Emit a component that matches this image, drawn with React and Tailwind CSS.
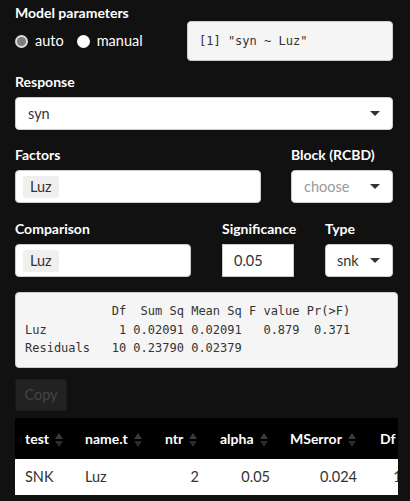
import React from 'react';

const Label = ({ children, className = '' }) => (
    <div className={`h-[21px] leading-[21px] text-[14px] font-bold text-white mb-[5px] ${className}`}>{children}</div>
);

const Caret = () => (
    <span className="w-0 h-0 border-l-[5px] border-r-[5px] border-t-[5px] border-l-transparent border-r-transparent border-t-[#333]"></span>
);

const SortIcon = () => (
    <svg width="8" height="16" viewBox="0 0 8 16" className="inline-block ml-[6px] align-middle">
        <polygon points="0,7 4,1 8,7" fill="#3a3a3a" />
        <polygon points="0,9 8,9 4,15" fill="#2a2a2a" />
    </svg>
);

const Chip = ({ children }) => (
    <span className="inline-block bg-[#efefef] text-[#333] rounded-[3px] px-[7px] h-[22px] leading-[22px] text-[14.5px]">{children}</span>
);

const anova = `            Df  Sum Sq Mean Sq F value Pr(>F)
Luz          1 0.02091 0.02091   0.879  0.371
Residuals   10 0.23790 0.02379               `;

const App = () => {
    const mono = { fontFamily: '"DejaVu Sans Mono", "Liberation Mono", monospace' };

    return (
        <div className="min-h-[501px] w-[410px] bg-[#111111] pl-[15px] pt-[2px] overflow-hidden" style={{ fontFamily: 'Lato, "Noto Sans", sans-serif' }}>
            {/* Model parameters */}
            <div className="flex">
                <div className="w-[172px]">
                    <Label className="mb-0">Model parameters</Label>
                    <div className="flex items-center h-[26px] mt-[1px] text-[14.5px] text-white">
                        <span className="w-[13px] h-[13px] rounded-full bg-[#dcdcdc] flex items-center justify-center">
                            <span className="w-[9px] h-[9px] rounded-full bg-[#7d7d7d]"></span>
                        </span>
                        <span className="ml-[7px]">auto</span>
                        <span className="w-[13px] h-[13px] rounded-full bg-white ml-[13px]"></span>
                        <span className="ml-[7px]">manual</span>
                    </div>
                </div>
                <div className="mt-[19px] w-[206px] h-[40px] bg-[#f5f5f5] border border-[#cccccc] rounded-[4px] pl-[11px] flex items-center text-[12px] text-[#333]" style={mono}>
                    <span className="whitespace-pre">[1] "syn ~ Luz"</span>
                </div>
            </div>

            {/* Response */}
            <div className="mt-[10px]">
                <Label>Response</Label>
                <div className="w-[378px] h-[33px] bg-white border border-[#cccccc] rounded-[4px] flex items-center justify-between pl-[12px] pr-[12px] text-[14.5px] text-[#333]">
                    <span>syn</span>
                    <Caret />
                </div>
            </div>

            {/* Factors / Block */}
            <div className="flex mt-[14px]">
                <div className="w-[276px]">
                    <Label>Factors</Label>
                    <div className="w-[246px] h-[33px] bg-white border border-[#cccccc] rounded-[4px] flex items-center pl-[7px]">
                        <Chip>Luz</Chip>
                    </div>
                </div>
                <div>
                    <Label>Block (RCBD)</Label>
                    <div className="w-[102px] h-[33px] bg-white border border-[#cccccc] rounded-[4px] flex items-center justify-between pl-[12px] pr-[12px] text-[14.5px] text-[#999]">
                        <span>choose</span>
                        <Caret />
                    </div>
                </div>
            </div>

            {/* Comparison / Significance / Type */}
            <div className="flex mt-[15px]">
                <div className="w-[207px]">
                    <Label>Comparison</Label>
                    <div className="w-[176px] h-[33px] bg-white border border-[#cccccc] rounded-[4px] flex items-center pl-[7px]">
                        <Chip>Luz</Chip>
                    </div>
                </div>
                <div className="w-[103px]">
                    <Label>Significance</Label>
                    <div className="w-[72px] h-[33px] bg-white border border-[#cccccc] flex items-center pl-[11px] text-[14.5px] text-[#333]">
                        0.05
                    </div>
                </div>
                <div>
                    <Label>Type</Label>
                    <div className="w-[68px] h-[33px] bg-white border border-[#cccccc] rounded-[4px] flex items-center justify-between pl-[11px] pr-[12px] text-[14.5px] text-[#333]">
                        <span>snk</span>
                        <Caret />
                    </div>
                </div>
            </div>

            {/* ANOVA output */}
            <pre className="mt-[15px] w-[383px] bg-[#f5f5f5] border border-[#cccccc] rounded-[4px] px-[9px] py-[9px] text-[12px] leading-[18.5px] text-[#333] overflow-hidden" style={mono}>{anova}</pre>

            <button className="mt-[11px] w-[52px] h-[32px] bg-[#222222] border border-[#1a1a1a] rounded-[2px] text-[14.5px] text-[#444]">
                Copy
            </button>

            {/* Results table */}
            <div className="mt-[7px] w-[383px] overflow-hidden">
                <table className="table-fixed border-collapse w-[405px] text-[14px]">
                    <thead>
                        <tr className="bg-black text-white font-bold h-[41px]">
                            <th className="w-[60px] text-left pl-[10px] font-bold whitespace-nowrap">test<SortIcon /></th>
                            <th className="w-[80px] text-left pl-[10px] font-bold whitespace-nowrap">name.t<SortIcon /></th>
                            <th className="w-[55px] text-left pl-[10px] font-bold whitespace-nowrap">ntr<SortIcon /></th>
                            <th className="w-[70px] text-left pl-[10px] font-bold whitespace-nowrap">alpha<SortIcon /></th>
                            <th className="w-[90px] text-left pl-[10px] font-bold whitespace-nowrap">MSerror<SortIcon /></th>
                            <th className="w-[50px] text-left pl-[10px] font-bold whitespace-nowrap">Df<SortIcon /></th>
                        </tr>
                    </thead>
                    <tbody>
                        <tr className="bg-white text-[#333] h-[36px] text-[14.5px]">
                            <td className="pl-[10px]">SNK</td>
                            <td className="pl-[10px]">Luz</td>
                            <td className="text-right pr-[11px]">2</td>
                            <td className="text-right pr-[10px]">0.05</td>
                            <td className="text-right pr-[13px]">0.024</td>
                            <td className="text-right pr-[10px]">10</td>
                        </tr>
                    </tbody>
                </table>
            </div>
        </div>
    );
};

export default App;
